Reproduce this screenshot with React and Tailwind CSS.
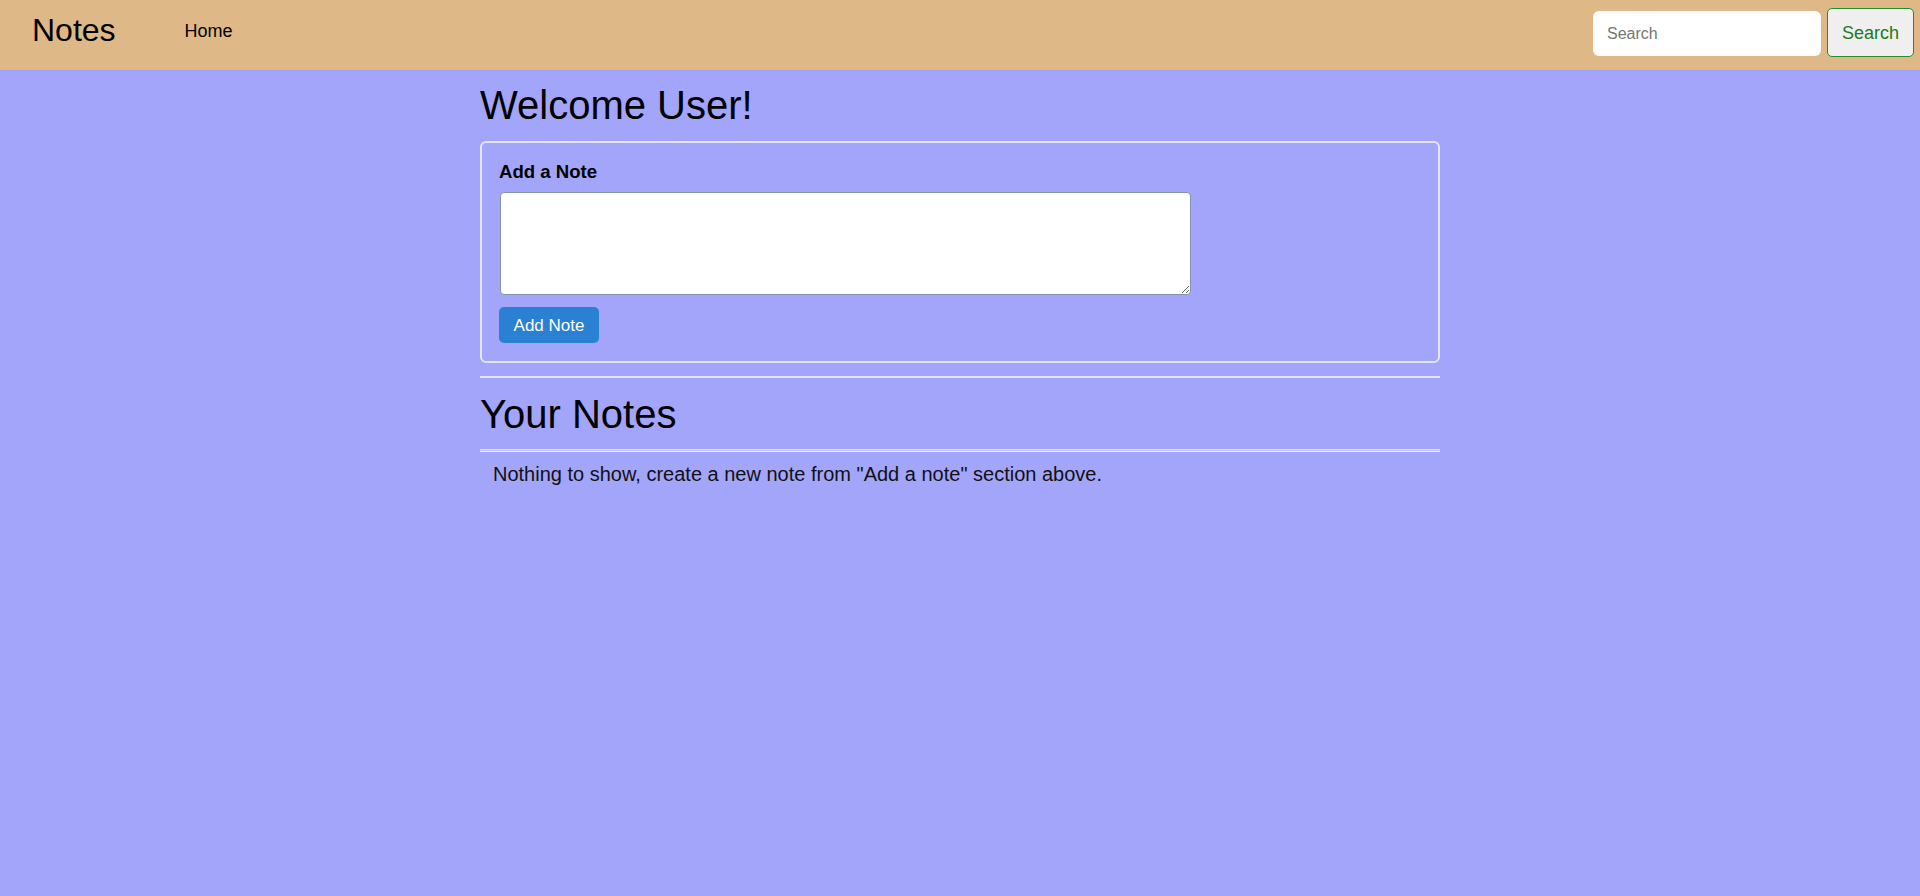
import React from "react";

export default function App() {
  return (
    <div className="min-h-screen bg-[#a3a5fb] text-black font-['Liberation_Sans',Arial,sans-serif]">
      <nav className="h-[70px] bg-[#deb887] flex items-start pl-[32px] pr-[6px]">
        <span className="mt-[12px] text-[32px] leading-[37px]">Notes</span>
        <a href="#" className="ml-[69px] mt-[21px] text-[18px] leading-[21px] text-black">
          Home
        </a>
        <div className="ml-auto flex items-start gap-[6px]">
          <input
            type="text"
            placeholder="Search"
            className="mt-[11px] w-[228px] h-[45px] rounded-[6px] bg-white px-[14px] text-[16px] placeholder:text-[#757575] outline-none"
          />
          <button className="mt-[8px] w-[87px] h-[49px] rounded-[5px] border border-[#2b8a2b] bg-[#efefef] text-[#1d7a1d] text-[18px] leading-none">
            Search
          </button>
        </div>
      </nav>

      <main className="w-[960px] mx-auto">
        <h1 className="mt-[12px] text-[40px] leading-[46px] font-normal">Welcome User!</h1>

        <div className="mt-[13px] border-2 border-[#e4e4f4] rounded-[6px] pt-[18px] pl-[17px] pb-[18px]">
          <label className="block text-[18.6px] font-bold leading-[22px]">Add a Note</label>
          <textarea className="block mt-[9px] ml-[1px] w-[691px] h-[103px] bg-white border border-[#8193b0] rounded-[4px] outline-none resize" />
          <button className="mt-[12px] h-[36px] w-[100px] bg-[#2a80d2] text-white text-[17px] leading-none rounded-[5px]">
            Add Note
          </button>
        </div>

        <div className="mt-[13px] h-[2px] bg-[#e2e2f4]" />

        <h2 className="mt-[13px] text-[40px] leading-[46px] font-normal">Your Notes</h2>

        <div className="mt-[12px] h-[3px] border-t border-b border-t-[#dedef2] border-b-[#ececf8] bg-[#c4c5f3]" />

        <p className="mt-[11px] pl-[13px] text-[20px] leading-[23px] text-[#111]">
          Nothing to show, create a new note from "Add a note" section above.
        </p>
      </main>
    </div>
  );
}
